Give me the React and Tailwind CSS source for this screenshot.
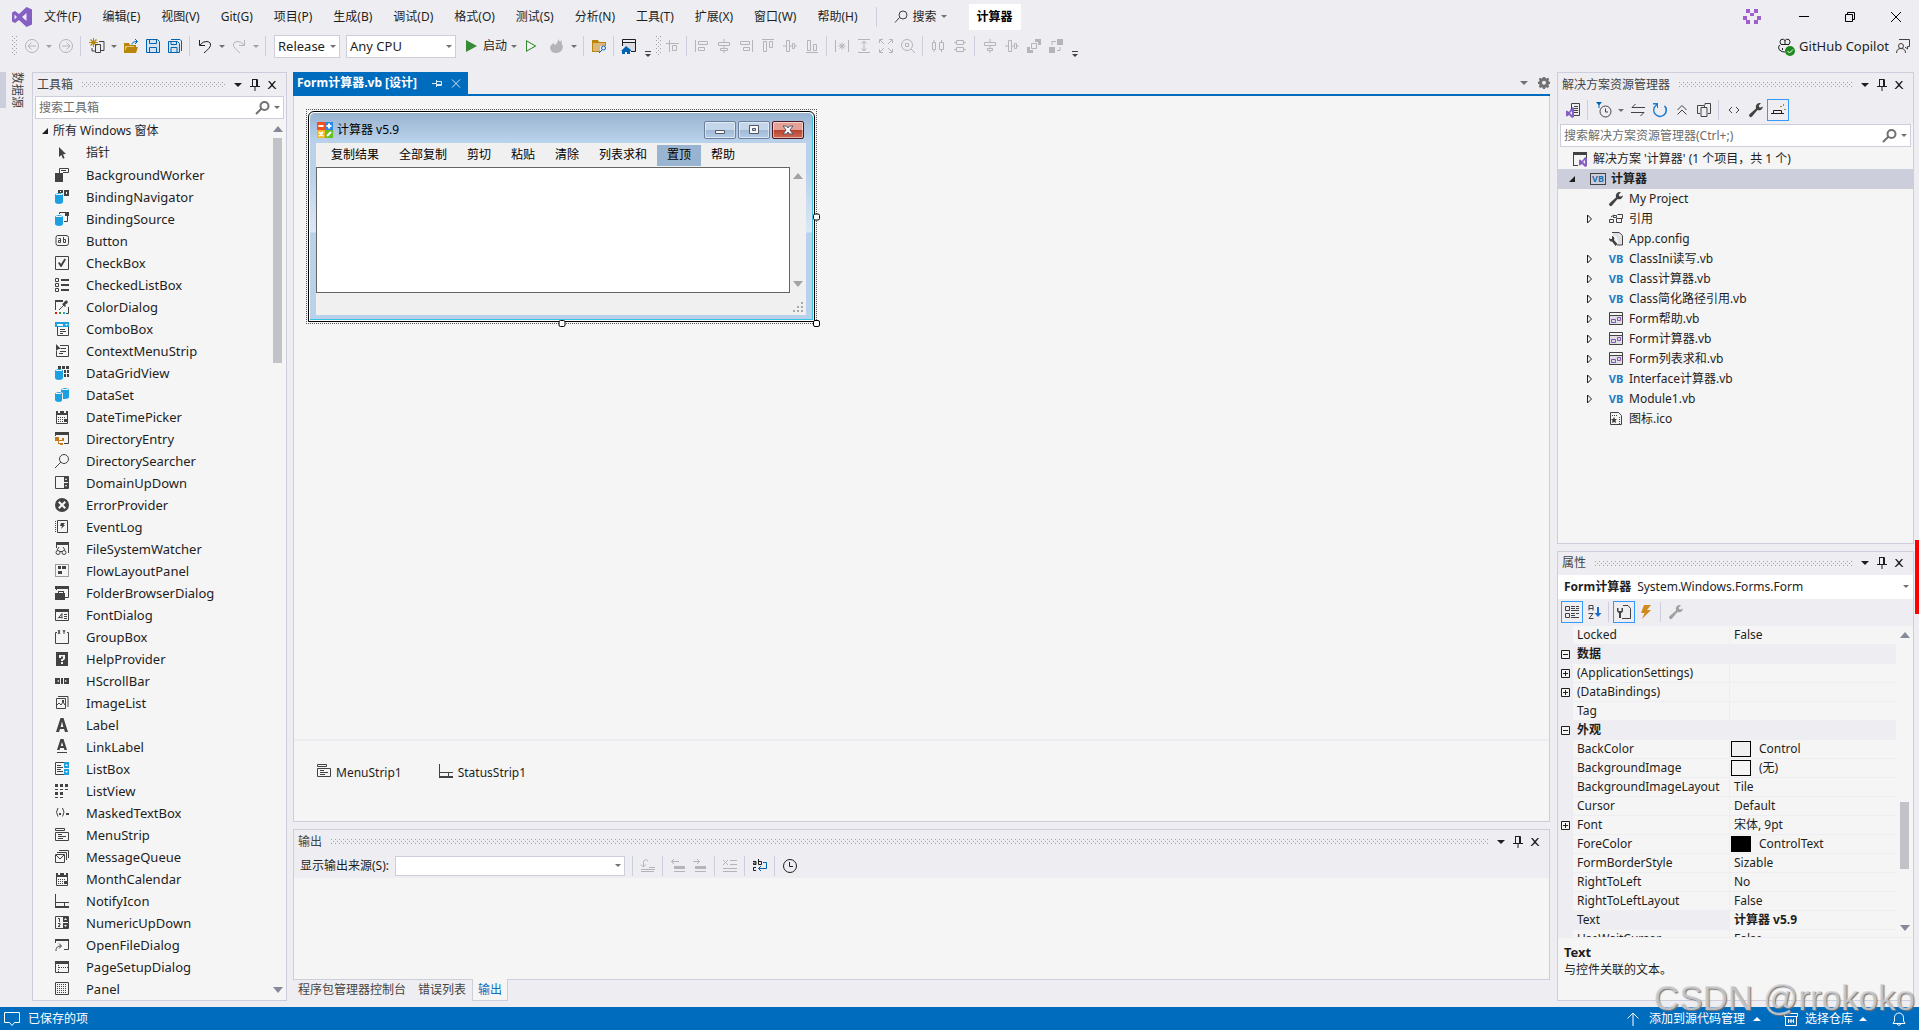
/**
 * App.jsx
 * Visual Studio style IDE shell: menu, toolbars, toolbox, form designer,
 * output window, solution explorer, property grid and status bar.
 */

import React from "react";

const MENUS = ["文件(F)", "编辑(E)", "视图(V)", "Git(G)", "项目(P)", "生成(B)", "调试(D)", "格式(O)", "测试(S)", "分析(N)", "工具(T)", "扩展(X)", "窗口(W)", "帮助(H)"];

const FORM_MENUS = ["复制结果", "全部复制", "剪切", "粘贴", "清除", "列表求和", "置顶", "帮助"];

// s: strokes, d: dotted strokes, f: fills, b: blue fills, w: light fills on top,
// p: purple strokes, u: blue strokes, x: [colour, path] fills underneath
const CYLINDER = "M1 6c0-1 2-2 4-2s4 1 4 2v7c0 1-2 2-4 2s-4-1-4-2z";
const CALENDAR = {
  s: "M2.5 3v11.5h11V3",
  f: "M2 2h12v4H2zM4 8h1v1H4zM6 8h1v1H6zM8 8h1v1H8zM10 8h1v1h-1zM4 10h1v1H4zM6 10h1v1H6zM8 10h1v1H8zM4 12h1v1H4zM6 12h1v1H6zM8 12h1v1H8zM10 10h3v3h-3z",
  w: "M4 2h2v2H4zM10 2h2v2h-2z",
};
const MENU_STRIP = { s: "M1.5 1.5h9v2h-9zM1.5 5.5h13v8h-13zM4 7.5h4M4 9.5h8M4 11.5h5" };
const TRAY_BAR = { s: "M1.5 1v13", f: "M1 9h14v1H1zM1 13h14v2H1zM10 10h1v3h-1z" };

const TOOLS = [
  ["指针", { f: "M5 2l7 7-3 .3 1.6 3.6-1.6.8-1.6-3.7L5 12z" }],
  ["BackgroundWorker", { s: "M5.5 6V1.5h9v4H9", f: "M1 6h8v9H1zM7 3h5v1H7z" }],
  ["BindingNavigator", { f: "M4 1h5v3H4zM10 1h5v6h-5z", b: CYLINDER, w: "M2 5h6v1H2zM6 2h1v1H6zM12 3h1v2h-1z" }],
  ["BindingSource", { s: "M5.5 3V1.5H11M13.5 5v5.5H10", f: "M11 1h4v4h-4z", b: CYLINDER, w: "M2 5h6v1H2z" }],
  ["Button", { s: "M4 2.5h8q2.5 0 2.5 2v6q0 2-2.5 2H4q-2 0-2-2v-6q0-2 2-2zM4.5 5.5h2v4h-2v-2h2M9.5 4v5.5h2v-3h-2" }],
  ["CheckBox", { s: "M1.5 1.5h13v13h-13z", f: "M4 8l1.500-1 1.500 2L10.500 3.500 12 4.500 7.500 12H6.500z" }],
  ["CheckedListBox", { s: "M1.5 1.5h3v3h-3zM1.5 6.5h3v3h-3zM1.5 11.5h3v3h-3z", f: "M7 2h8v2H7zM7 7h8v2H7zM7 12h8v2H7z" }],
  ["ColorDialog", { s: "M1.5 11V1.5H8M14.5 8v6.5H12M5 11l5-5", f: "M1 1h8v2H1zM8 5l2 2 1 1 1-1-1-1 2-1.5c2-2 0-4-2-2.5L9.5 4z", x: [["#e51400", "M1 13h2v2H1z"], ["#339933", "M5 13h2v2H5z"], ["#1ba1e2", "M9 13h2v2H9z"]] }],
  ["ComboBox", { s: "M3.5 6v8.5h11V6M6 8.5h5M6 10.5h6M6 12.5h3", b: "M1 1h14v5H1z", w: "M3 3h6v2H3zM11 3h3l-1.5 2z" }],
  ["ContextMenuStrip", { s: "M6 2.5h8.5v11h-12V8M5 10.5h4M7 5.5h5M6 8.5h6", f: "M2 1l5 5H4.5L2 8z" }],
  ["DataGridView", { f: "M4 1h3v3H4zM8 1h3v3H8zM12 1h3v3h-3zM10 5h2v3h-2zM13 5h2v3h-2zM10 9h2v3h-2zM13 9h2v3h-2z", b: CYLINDER, w: "M2 5h6v1H2z" }],
  ["DataSet", { b: "M1 7c0-1 2-2 4-2s3 1 3 2v6c0 1-1 2-3 2s-4-1-4-2zM7 3c0-1 2-2 4-2s4 1 4 2v7c0 1-2 2-4 2H9V6L7 5z", w: "M2 6h5v1H2zM8 2h6v1H8z" }],
  ["DateTimePicker", CALENDAR],
  ["DirectoryEntry", { s: "M1.5 5V1.5h13v11H10", f: "M1 1h14v3H1z", x: [["#c27d1a", "M1 6h4v3h3V7h2v3H5v2h4v2H6v-1H4v-3H1z"]] }],
  ["DirectorySearcher", { s: "M1 15l6-6M5.5 6a4.500 4.500 0 1 0 9 0 4.500 4.500 0 1 0-9 0" }],
  ["DomainUpDown", { s: "M1.5 1.5h13v12h-13z", f: "M10 2h4v5h-4zM10 8h4v5h-4z", w: "M11 5l1-2 1 2zM11 10h2l-1 2z" }],
  ["ErrorProvider", { f: "M8 1a7 7 0 1 0 0 14A7 7 0 1 0 8 1", w: "M5.5 4L8 6.5 10.5 4 12 5.5 9.5 8l2.5 2.5-1.5 1.5L8 9.5 5.5 12 4 10.5 6.5 8 4 5.5z" }],
  ["EventLog", { s: "M3.5 1.5h10v12h-10zM1.5 2v1M1.5 4v1M1.5 6v1M1.5 8v1M1.5 10v1M1.5 12v1", f: "M7 4h4L9.5 6H11L7 10l1-3H6z" }],
  ["FileSystemWatcher", { s: "M2.5 7V1.5h12V12M2 11.5a1.5 1.5 0 1 0 4 0 1.5 1.5 0 1 0-4 0M8 11.5a1.5 1.5 0 1 0 4 0 1.5 1.5 0 1 0-4 0M3 9l2-3M11 9L9 6M6 10.5h2", f: "M2 1h13v3H2z" }],
  ["FlowLayoutPanel", { d: "M1.5 1.5h13v12h-13z", f: "M4 3h3v3H4zM8 3h4v3H8zM4 8h4v3H4z" }],
  ["FolderBrowserDialog", { s: "M2.5 5V1.5h12v11H11", f: "M1 1h14v3H1zM4 6h6v2h1v7H1V8h3z", w: "M5 7h4v1H5z" }],
  ["FontDialog", { s: "M1.5 2.5h13v11h-13zM4 11.5l4-5v5M5 10.5h3M10 7.5h3M10 9.5h3M10 11.5h3", f: "M1 2h14v3H1z" }],
  ["GroupBox", { s: "M3 3.5H1.5v11h13v-11H13M4 1l2 4M6 1L4 5M9 1l1 2 1-2M10 3v2" }],
  ["HelpProvider", { f: "M2 1h12v14H2z", w: "M5 4h6v4L9 9.5V10H7V8.500l2-1V5.500H7V7H5zM7 11h2v2H7z" }],
  ["HScrollBar", { f: "M1 5h14v6H1z", w: "M5 7v2L3 8zM6 5h1v6H6zM9 5h1v6H9zM11 7v2l2-1z" }],
  ["ImageList", { s: "M4 1.5h10V12M2.5 3.5h9v10h-9zM3 10l2-2 2 2 2-3 2 3", f: "M8 5h2v2H8z" }],
  ["Label", { f: "M6.5 1h3L14 15h-3l-1-3H6l-1 3H2zM8 4.5L6.700 10h2.600z" }],
  ["LinkLabel", { f: "M6.5 0h3L13 11h-2.5l-.7-2H6.200l-.7 2H3zM8 3L6.800 7h2.400zM3 13h10v1H3z" }],
  ["ListBox", { s: "M10 1.5H1.5v12H10M3 4.5h4M3 6.5h6M3 8.5h4M3 10.5h6", b: "M10 1h5v6h-5zM10 8h5v6h-5z", w: "M11 5l1.5-2L14 5zM11 10h3l-1.5 2z" }],
  ["ListView", { f: "M1 1h3v3H1zM6 1h3v3H6zM11 1h3v3h-3zM1 9h3v3H1zM6 9h3v3H6zM1 6h3v1H1zM6 6h3v1H6zM11 6h3v1h-3zM1 14h3v1H1zM6 14h3v1H6z" }],
  ["MaskedTextBox", { s: "M4 3Q1 7 4 11.5M8.5 3q3 4 0 8.5", f: "M5 8h2v2H5zM12 8h3v2h-3z" }],
  ["MenuStrip", MENU_STRIP],
  ["MessageQueue", { s: "M1.5 5.5h9v8h-9zM2 6l4 4 4-4M3 3.5h9.5V11M5 1.5h9.5V9" }],
  ["MonthCalendar", CALENDAR],
  ["NotifyIcon", TRAY_BAR],
  ["NumericUpDown", { s: "M1.5 1.5h13v12h-13zM4 3.5h1.5V7M4 8.5h2v1.5l-2 1.5h2", f: "M9 2h5v5H9zM9 8h5v5H9z", w: "M10 5l1.5-2L13 5zM10 10h3l-1.5 2z" }],
  ["OpenFileDialog", { s: "M1.5 6V2.5h13v10H10M2 14c0-4 2-5 5-5M5 6.5L7.5 9 5 11.5", f: "M1 2h14v2H1z" }],
  ["PageSetupDialog", { s: "M1.5 2.5h13v11h-13z", f: "M1 2h14v3H1z", d: "M4.5 6v7M5 8.5h9" }],
  ["Panel", { s: "M1.5 1.5h13v12h-13z", d: "M3 3.5h10M3 5.5h10M3 7.5h10M3 9.5h10M3 11.5h10" }],
];

const WRENCH = "M15 4.5a4 4 0 0 1-5.500 3.500L4 14.500a1.600 1.600 0 0 1-2.500-2.300L8 6.500a4 4 0 0 1 5-5.300L10.800 3.500l.4 1.700 1.700.4z";
const VB_ICON = "vb";
const FORM_ICON = { s: "M1.5 1.5h13v12h-13zM1 4.5h14", x: [["#e0e0e4", "M2 5h12v8H2z"]], p: "M3.5 8.5h4v3h-4zM9.5 6.5h3v3h-3z" };

const FILES = [
  ["My Project", { f: WRENCH }, false],
  ["引用", { s: "M1.5 8.5h4v3h-4zM5.5 4.5h3v2h-3zM9.5 3.5h5v4h-5M8.5 7.5h5v4h-5zM3 6l3-2" }, true],
  ["App.config", { s: "M4 1.5h7l3.5 3v9.5H9", f: "M1 7c0 3 2 4 3 3.5L7.5 15l2-2L6 9C7 7 6 5.500 4 5v3H2.500z", x: [["#e0e0e4", "M5 2h6v3h3v9h-4V9L8 5H5z"]] }, false],
  ["ClassIni读写.vb", VB_ICON, true],
  ["Class计算器.vb", VB_ICON, true],
  ["Class简化路径引用.vb", VB_ICON, true],
  ["Form帮助.vb", FORM_ICON, true],
  ["Form计算器.vb", FORM_ICON, true],
  ["Form列表求和.vb", FORM_ICON, true],
  ["Interface计算器.vb", VB_ICON, true],
  ["Module1.vb", VB_ICON, true],
  ["图标.ico", { s: "M2.5 1.5h8l3 3v9h-11z", f: "M6 6l1 2h2L7.500 9.500 8 12l-2-1-2 1 .5-2.500L3 8h2z", d: "M4 4.5h6M11.5 6v7" }, false],
];

// [name, value, kind, swatch]
const PROPS = [
  ["Locked", "False"],
  ["数据", "", "group"],
  ["(ApplicationSettings)", "", "plus"],
  ["(DataBindings)", "", "plus"],
  ["Tag", ""],
  ["外观", "", "group"],
  ["BackColor", "Control", "", "bg-[#f0f0f0]"],
  ["BackgroundImage", "(无)", "", "bg-[#f5f5f5]"],
  ["BackgroundImageLayout", "Tile"],
  ["Cursor", "Default"],
  ["Font", "宋体, 9pt", "plus"],
  ["ForeColor", "ControlText", "", "bg-black"],
  ["FormBorderStyle", "Sizable"],
  ["RightToLeft", "No"],
  ["RightToLeftLayout", "False"],
  ["Text", "计算器 v5.9", "selected"],
  ["UseWaitCursor", "False"],
];

function Glyph({ icon, className = "text-[#424242]" }) {
  return (
    <svg viewBox="0 0 16 16" className={`h-4 w-4 shrink-0 ${className}`} fill="none" aria-hidden="true">
      {icon.x?.map(([color, d]) => <path key={d} d={d} fill={color} />)}
      {icon.f && <path d={icon.f} fill="currentColor" fillRule="evenodd" />}
      {icon.s && <path d={icon.s} stroke="currentColor" />}
      {icon.d && <path d={icon.d} stroke="currentColor" strokeDasharray="1 1" />}
      {icon.b && <path d={icon.b} fill="#1ba1e2" />}
      {icon.w && <path d={icon.w} fill="#f5f5f5" />}
      {icon.p && <path d={icon.p} stroke="#8254b5" />}
      {icon.u && <path d={icon.u} stroke="#0063b1" />}
    </svg>
  );
}

function Caret({ big = false, up = false, className = "text-[#717171]" }) {
  return (
    <svg viewBox="0 0 8 4" className={`pointer-events-none shrink-0 ${big ? "h-1 w-2" : "h-[3px] w-1.5"} ${className}`} aria-hidden="true">
      <path d={up ? "M0 4h8L4 0z" : "M0 0h8L4 4z"} fill="currentColor" />
    </svg>
  );
}

function ScrollArrow({ down = false, className = "text-[#868999]" }) {
  return (
    <svg viewBox="0 0 10 6" className={`h-1.5 w-2.5 shrink-0 ${className}`} aria-hidden="true">
      <path d={down ? "M0 0h10L5 6z" : "M0 6h10L5 0z"} fill="currentColor" />
    </svg>
  );
}

function Search() {
  return (
    <svg viewBox="0 0 16 16" className="h-4 w-4 shrink-0 text-[#717171]" fill="none" stroke="currentColor" strokeWidth="2" aria-hidden="true">
      <path d="M2 14l5-5M6.500 6a4 4 0 1 0 8 0 4 4 0 1 0-8 0" />
    </svg>
  );
}

const Sep = () => <span className="mr-1 ml-[3px] h-5 w-px shrink-0 bg-[#cccedb]" />;

function ToolButton({ icon, label, className, pressed = false }) {
  return (
    <button
      aria-label={label}
      className={`flex h-[22px] w-[22px] shrink-0 items-center justify-center ${pressed ? "border border-[#3399ff]" : ""}`}
    >
      <Glyph icon={icon} className={className} />
    </button>
  );
}

function CaretButton({ label, className }) {
  return (
    <button aria-label={label} className="flex h-[22px] w-3 shrink-0 items-center justify-center">
      <Caret className={className} />
    </button>
  );
}

function Grip({ vertical = false }) {
  return (
    <span
      className={`bg-[conic-gradient(from_270deg_at_1px_1px,#a0a0a8_90deg,transparent_0),conic-gradient(from_270deg_at_1px_1px,#a0a0a8_90deg,transparent_0)] bg-[length:4px_4px] bg-[position:0_0,2px_2px] ${vertical ? "h-5 w-[5px] shrink-0" : "h-[5px] flex-1"}`}
    />
  );
}

function PanelHeader({ title }) {
  return (
    <div className="flex h-[23px] shrink-0 items-center gap-px bg-[#eeeef2] pr-1.5 pl-1">
      <h2 className="mr-2 text-[#444]">{title}</h2>
      <Grip />
      <button aria-label="窗口位置" className="ml-1 flex h-4 w-4 items-center justify-center">
        <Caret big className="text-[#1e1e1e]" />
      </button>
      <button aria-label="自动隐藏" className="flex h-4 w-4 items-center justify-center">
        <Glyph icon={{ s: "M5.5 2v7.5h5V2.5h-5M3 9.5h10M8 10v4M9.5 3v6" }} className="text-[#1e1e1e]" />
      </button>
      <button aria-label="关闭" className="flex h-4 w-4 items-center justify-center">
        <Glyph icon={{ f: "M4 4h1.500L8 6.800 10.500 4H12L8.900 8 12.500 12H11L8 9.200 5 12H3.500L7.100 8z" }} className="text-[#1e1e1e]" />
      </button>
    </div>
  );
}

function SearchBox({ id, placeholder }) {
  return (
    <div className="mx-0.5 flex h-[23px] shrink-0 items-center gap-1 border border-[#cccedb] bg-white pr-[3px] pl-[3px]">
      <input id={id} aria-label={placeholder} placeholder={placeholder} className="min-w-0 flex-1 bg-transparent outline-none placeholder:text-[#6d6d6d]" />
      <Search />
      <Caret />
    </div>
  );
}

function MenuBar() {
  return (
    <header className="flex h-[33px] shrink-0 items-center">
      <svg viewBox="0 0 20 20" className="ml-3 h-5 w-5" aria-hidden="true">
        <path d="M14.500 0L20 2.500v15L14.500 20 7 13l-4 3-3-1.500v-9L3 4l4 3zM14.500 6L10 10l4.500 4zM2.500 7.500v5L5 10z" fill="#865fc5" fillRule="evenodd" />
      </svg>
      <nav className="ml-0.5 flex gap-px">
        {MENUS.map((m) => (
          <button key={m} className="px-2.5 whitespace-nowrap">{m}</button>
        ))}
      </nav>
      <span className="ml-2 h-5 w-px bg-[#cccedb]" />
      <button className="ml-4 flex items-center gap-1">
        <Glyph icon={{ s: "M2 13.5l4.500-5M6 6a4 4 0 1 0 8 0 4 4 0 1 0-8 0" }} />
        搜索
        <Caret />
      </button>
      <span className="ml-[22px] flex h-[26px] items-center bg-white px-2 font-bold text-black">计算器</span>
      <div className="ml-auto flex items-center">
        <svg viewBox="0 0 18 15" className="mr-5 h-[15px] w-[18px]" aria-hidden="true">
          <path d="M3 0h4v4H3zM11 0h4v4h-4zM7 4h4v3H7zM0 7h4v4H0zM14 7h4v4h-4zM3 11h4v4H3zM11 11h4v4h-4z" fill="#a05fd0" />
        </svg>
        <button aria-label="最小化" className="flex h-8 w-[46px] items-center justify-center">
          <span className="h-px w-2.5 bg-black" />
        </button>
        <button aria-label="还原" className="flex h-8 w-[46px] items-center justify-center">
          <svg viewBox="0 0 10 10" className="h-2.5 w-2.5" fill="none" stroke="#000" aria-hidden="true">
            <path d="M.5 2.5h7v7h-7zM2.5 2V.5h7v7H8" />
          </svg>
        </button>
        <button aria-label="关闭" className="flex h-8 w-[46px] items-center justify-center">
          <svg viewBox="0 0 10 10" className="h-2.5 w-2.5" stroke="#000" aria-hidden="true">
            <path d="M0 0l10 10M10 0L0 10" />
          </svg>
        </button>
      </div>
    </header>
  );
}

const FORMAT_TOOLS = [
  [["对齐到网格", "M2 5.5h13M5.5 2v12M8.5 7.5h4v5h-4z"]],
  [
    ["左对齐", "M1.5 2v12M4.5 3.5h9v3h-9zM4.5 9.5h6v3h-6z"],
    ["居中对齐", "M2.5 4.5h11v3h-11zM4.5 10.5h7v2h-7zM8 1v3M8 8v2M8 13v2"],
    ["右对齐", "M14.5 2v12M2.5 3.5h9v3h-9zM5.5 9.5h6v3h-6z"],
    ["顶端对齐", "M2 1.5h12M3.5 3.5h3v10h-3zM9.5 3.5h3v6h-3z"],
    ["中间对齐", "M4.5 2.5h3v11h-3zM10.5 5.5h2v5h-2zM1 8h3M8 8h2M13 8h2"],
    ["底端对齐", "M2 14.5h12M3.5 2.5h3v10h-3zM9.5 6.5h3v6h-3z"],
  ],
  [
    ["使宽度相同", "M1.5 2v12M14.5 2v12M8 4.5v7M4.5 8h7M5.5 5.5l5 5M10.5 5.5l-5 5"],
    ["使高度相同", "M2 1.5h12M2 14.5h12M8 3v10M5.5 5.5L8 3l2.5 2.5M5.5 10.5L8 13l2.5-2.5"],
    ["使大小相同", "M1.5 5V1.5H5M11 1.5h3.5V5M1.5 11v3.5H5M11 14.5h3.5V11M2 2l4 4M14 2l-4 4M2 14l4-4M14 14l-4-4"],
    ["按网格调整大小", "M1.5 7a5.5 5.5 0 1 0 11 0 5.5 5.5 0 1 0-11 0M11 11l4 4M5.5 5.5h3v3h-3z"],
  ],
  [
    ["水平间距相等", "M2.5 4.5h3v7h-3zM9.5 4.5h4v7h-4zM4 2v2M4 12v2M11.5 2v2M11.5 12v2"],
    ["垂直间距相等", "M4.5 2.5h7v4h-7zM4.5 9.5h7v4h-7zM2 4.5h2M12 4.5h2M2 11.5h2M12 11.5h2"],
  ],
  [
    ["水平居中", "M2.5 4.5h11v3h-11zM5.5 10.5h5v2h-5zM8 1v3M8 8v2M8 13v2"],
    ["垂直居中", "M4.5 2.5h3v11h-3zM10.5 5.5h2v5h-2zM1 8h3M8 8h2M13 8h2"],
    ["置于顶层", "M5.5 5.5h5v5h-5z", "M9 1h6v6h-3V4H9zM1 9h3v3h3v3H1z"],
    ["置于底层", "M4 7V3.5h4M12 9v3.5H9", "M9 1h6v6H9zM1 9h6v6H1z"],
  ],
];

function Overflow() {
  return (
    <button aria-label="工具栏选项" className="flex h-[22px] w-4 shrink-0 flex-col items-center justify-end gap-0.5">
      <span className="h-px w-1.5 bg-[#424242]" />
      <Caret className="text-[#424242]" />
    </button>
  );
}

function Toolbars() {
  const grey = "text-[#b4b4ba]";
  const circle = "M8 1.5a6.5 6.5 0 1 0 0 13 6.5 6.5 0 1 0 0-13";
  return (
    <div className="flex h-[26px] shrink-0 items-center pl-3">
      <Grip vertical />
      <span className="w-1" />
      <ToolButton label="后退" icon={{ s: `${circle}M12 8H4.5M7.5 4.5L4 8l3.5 3.5` }} className={grey} />
      <CaretButton label="后退列表" className="text-[#a0a0a6]" />
      <ToolButton label="前进" icon={{ s: `${circle}M4 8h7.5M8.5 4.5L12 8l-3.5 3.5` }} className={grey} />
      <Sep />
      <span className="w-px" />
      <ToolButton label="新建项目" icon={{ s: "M10 3.5h5v9h-3M6.5 6.5h5v8h-5zM3 10v3h3", x: [["#b8860b", "M4 0h1v3l2-2 1 1-2 2h3v1H6l2 2-1 1-2-2v3H4V6L2 8 1 7l2-2H0V4h3L1 2l1-1 2 2z"]] }} />
      <CaretButton label="新建列表" />
      <ToolButton label="打开" icon={{ x: [["#b8860b", "M1 5h5l1 2h6v2h2l-2 6H1z"], ["#e3c27a", "M2 8h9v1H4l-2 4z"]], u: "M9 6.5q0-3 5-3M12 1l2.5 2.5L12 6" }} />
      <ToolButton label="保存" icon={{ x: [["#d5e3f0", "M2 2h12v12H2z"]], u: "M1.5 1.5h11l2 2v11h-13zM4.5 1.5v4h7v-4M4.5 14.5v-5h7v5" }} />
      <ToolButton label="全部保存" icon={{ x: [["#d5e3f0", "M2 4h10v10H2z"]], u: "M1.5 3.5h9l2 2v9h-11zM4 3.5v3h5.5v-3M4 14.5v-5h6v5M4 1.5h9l1.5 1.5v10" }} />
      <Sep />
      <ToolButton label="撤消" icon={{ s: "M2.5 2v5.5H8M3 7q3-4 7-3.5t3.5 4Q13 10 7 15" }} className="text-[#1e1e1e]" />
      <CaretButton label="撤消列表" />
      <ToolButton label="重做" icon={{ s: "M13.5 2v5.5H8M13 7q-3-4-7-3.5T2.5 7.5Q3 10 9 15" }} className={grey} />
      <CaretButton label="重做列表" className="text-[#a0a0a6]" />
      <Sep />
      <div className="ml-1 flex h-[23px] w-[66px] shrink-0 items-center border border-[#cccedb] bg-white px-[3px] text-[13px]">
        <select aria-label="解决方案配置" className="min-w-0 flex-1 appearance-none bg-transparent outline-none">
          <option>Release</option>
        </select>
        <Caret />
      </div>
      <div className="ml-1.5 flex h-[23px] w-[110px] shrink-0 items-center border border-[#cccedb] bg-white px-[3px] text-[13px]">
        <select aria-label="解决方案平台" className="min-w-0 flex-1 appearance-none bg-transparent outline-none">
          <option>Any CPU</option>
        </select>
        <Caret />
      </div>
      <button className="ml-2 flex items-center gap-[3px]">
        <Glyph icon={{ x: [["#388a34", "M2 2l11 6-11 6z"]] }} />
        启动
      </button>
      <span className="w-px" />
      <CaretButton label="启动列表" />
      <ToolButton label="开始执行" icon={{ x: [["#388a34", "M3 2l10.500 6L3 14zM4.200 4v8l7-4z"]], w: "M4.200 4v8l7-4z" }} />
      <span className="w-1" />
      <ToolButton label="热重载" icon={{ f: "M9 1q1 3 3 2l1-1q-1 4 1 6-.5 7-6.500 7T1 10q0-3 4-5 0 2 1 2 3-2 3-6z" }} className={grey} />
      <CaretButton label="热重载列表" />
      <Sep />
      <ToolButton label="在文件中查找" icon={{ x: [["#b8860b", "M1 2h6l1 2h7v10H1z"], ["#dcb67a", "M2 5h12v8H2z"], ["#eeeef2", "M9 8h7v8H9z"]], u: "M8 15l3-3M10.5 10a2 2 0 1 0 4 0 2 2 0 1 0-4 0" }} />
      <Sep />
      <ToolButton label="主页" icon={{ s: "M1.5 8V1.5h13v12H10M1 4.5h14", x: [["#dcdce2", "M2 5h12v8h-4L6 8H2z"], ["#0063b1", "M5 8l5 4v1H9v3H6v-2H4v2H1v-3H0z"]] }} className="text-[#1e1e1e]" />
      <Overflow />
      <Grip vertical />
      {FORMAT_TOOLS.map((group, i) => (
        <React.Fragment key={i}>
          {i > 0 && <Sep />}
          {group.map(([label, s, f]) => (
            <ToolButton key={label} label={label} icon={{ s, f }} className={grey} />
          ))}
        </React.Fragment>
      ))}
      <Overflow />
      <div className="ml-auto flex items-center pr-2 text-[13px]">
        <button className="flex items-center gap-1.5">
          <span className="relative flex">
            <Glyph icon={{ s: "M2.5 7Q1 9 2 11.5q3 3 6 2.5M4 1.5q3-1 4 1 1-2 4-1 2 2 0 5H4q-2-3 0-5zM8 2v5M5.5 10v2" }} className="text-[#1e1e1e]" />
            <svg viewBox="0 0 10 10" className="absolute -right-0.5 -bottom-0.5 h-2.5 w-2.5" aria-hidden="true">
              <circle cx="5" cy="5" r="5" fill="#1f8a1f" />
              <path d="M2.5 5l2 2L8 3.5" fill="none" stroke="#fff" />
            </svg>
          </span>
          GitHub Copilot
        </button>
        <button aria-label="发送反馈" className="ml-1.5">
          <Glyph icon={{ s: "M4 1.5h10.5v7h-2V11L10 9M3.5 8a2.5 2.5 0 1 0 5 0 2.5 2.5 0 1 0-5 0M1.5 15q0-4.5 4.5-4.5T10.500 15" }} />
        </button>
      </div>
    </div>
  );
}

function Toolbox() {
  return (
    <aside className="flex w-[255px] shrink-0 flex-col border border-[#cccedb] bg-[#f5f5f5]">
      <PanelHeader title="工具箱" />
      <SearchBox id="toolbox-search" placeholder="搜索工具箱" />
      <div className="flex min-h-0 flex-1">
        <ul className="min-w-0 flex-1 overflow-hidden pt-px">
          <li className="flex h-[22px] items-center gap-1 pl-2">
            <svg viewBox="0 0 8 8" className="h-2 w-2" aria-hidden="true">
              <path d="M7 1v6H1z" fill="#1e1e1e" />
            </svg>
            <span>所有 Windows 窗体</span>
          </li>
          {TOOLS.map(([name, icon]) => (
            <li key={name}>
              <button className="flex h-[22px] w-full items-center gap-4 pl-[21px] text-left">
                <Glyph icon={icon} />
                <span className={name === "指针" ? "text-xs" : "text-[13px]"}>{name}</span>
              </button>
            </li>
          ))}
        </ul>
        <div className="flex w-[17px] flex-col items-center py-[7px]">
          <ScrollArrow />
          <span className="mt-1.5 h-[225px] w-[9px] bg-[#c2c3c9]" />
          <span className="flex-1" />
          <ScrollArrow down />
        </div>
      </div>
    </aside>
  );
}

function Handle({ className }) {
  return <span className={`absolute h-[7px] w-[7px] rounded-[2px] border border-black bg-white ${className}`} />;
}

function CaptionButton({ label, close = false, children }) {
  return (
    <button
      aria-label={label}
      className={`flex h-[18px] w-8 items-center justify-center rounded-[2px] border shadow-[inset_0_0_0_1px_rgba(255,255,255,0.5)] ${
        close
          ? "border-[#4c1822] bg-[linear-gradient(#e6a197_50%,#b9412c_50%,#cf6a55)]"
          : "border-[#6b7f9c] bg-[linear-gradient(#c3d6ea_50%,#9fb8d4_50%,#b5cde6)]"
      }`}
    >
      <svg viewBox="0 0 12 10" className="h-2.5 w-3" fill="#f8f8f8" stroke="#535666" aria-hidden="true">{children}</svg>
    </button>
  );
}

function FormWindow() {
  return (
    <div className="relative w-[511px] border border-dotted border-[#555] p-px">
      <div className="rounded-t-md border border-black bg-white p-px">
        <div className="rounded-t-[5px] border-r border-b border-[#36c5e0] bg-[#b9d1ea] bg-[linear-gradient(#99b4d1,#b9d1ea_28px,#b9d1ea_60px,#dce8f6_119px,#b9d1ea_120px)] px-1.5 pb-1">
          <div className="flex h-[30px] items-center gap-1 pt-1 pr-0.5 pl-px text-black">
            <svg viewBox="0 0 16 16" className="h-4 w-4" aria-hidden="true">
              <path d="M0 0h8v8H0z" fill="#f25022" />
              <path d="M8 0h8v8H8z" fill="#2b88e6" />
              <path d="M0 8h8v8H0z" fill="#f5b81c" />
              <path d="M8 8h8v8H8z" fill="#6abf1e" />
              <path d="M1.5 4h5M9.5 4h5M12 1.5v5M2 10l4 4M6 10l-4 4M10 14l4-4" stroke="#fff" strokeWidth="2" />
            </svg>
            <span className="flex-1">计算器 v5.9</span>
            <div className="flex gap-0.5">
              <CaptionButton label="窗体最小化"><path d="M1.5 5.5h9v3h-9z" /></CaptionButton>
              <CaptionButton label="窗体最大化"><path fillRule="evenodd" d="M1.5 .5h9v8h-9zM4.5 3.5v2h3v-2z" /></CaptionButton>
              <CaptionButton label="窗体关闭" close><path d="M1 1h3.500L6 3l1.500-2H11L8 5l3 4H7.500L6 7 4.500 9H1l3-4z" /></CaptionButton>
            </div>
          </div>
          <div className="bg-[#f0f0f0]">
            <div className="flex h-6 items-center pl-[5px] text-black">
              {FORM_MENUS.map((m) => (
                <button key={m} className={`h-[21px] px-2.5 whitespace-nowrap ${m === "置顶" ? "bg-[#99b4d1]" : ""}`}>{m}</button>
              ))}
            </div>
            <div className="flex h-[126px]">
              <textarea aria-label="表达式" className="block min-w-0 flex-1 resize-none border border-[#646464] bg-white outline-none" />
              <div className="flex w-4 flex-col items-center justify-between py-1.5">
                <ScrollArrow className="text-[#a3a3a3]" />
                <ScrollArrow down className="text-[#a3a3a3]" />
              </div>
            </div>
            <div className="flex h-[22px] items-end justify-end p-[3px]">
              <svg viewBox="0 0 10 10" className="h-2.5 w-2.5" fill="#a8a8a8" aria-hidden="true">
                <path d="M8 0h2v2H8zM4 4h2v2H4zM8 4h2v2H8zM0 8h2v2H0zM4 8h2v2H4zM8 8h2v2H8z" />
              </svg>
            </div>
          </div>
        </div>
      </div>
      <Handle className="top-1/2 -right-1 -translate-y-1/2" />
      <Handle className="-bottom-1 left-1/2 -translate-x-1/2" />
      <Handle className="-right-1 -bottom-1" />
    </div>
  );
}

function Designer() {
  return (
    <section className="flex min-h-0 flex-1 flex-col">
      <div className="flex h-6 shrink-0 items-end border-b-2 border-[#006cbe]">
        <div className="flex h-[22px] items-center bg-[#006cbe] px-1 text-white">
          <span className="font-bold whitespace-nowrap">Form计算器.vb [设计]</span>
          <button aria-label="固定选项卡" className="ml-3">
            <Glyph icon={{ s: "M3 8.5h4M7.5 5v7M8 6.5h4.5v4H8M8 9.5h4" }} className="text-[#d8e8f5]" />
          </button>
          <button aria-label="关闭选项卡" className="ml-[3px]">
            <Glyph icon={{ s: "M4 4.5l8 8M12 4.5l-8 8" }} className="text-[#d8e8f5]" />
          </button>
        </div>
        <div className="ml-auto flex h-[22px] items-center gap-2.5">
          <Caret big />
          <svg viewBox="2 3 12 12" className="h-3 w-3 text-[#717171]" aria-hidden="true">
            <path
              d="M7 2.500h2l.3 1.500 1.200.5 1.300-.8 1.400 1.400-.8 1.300.5 1.100 1.600.3v2l-1.600.3-.5 1.200.8 1.300-1.400 1.400-1.300-.8-1.200.5L9 15.200H7l-.3-1.500-1.200-.5-1.300.8-1.400-1.400.8-1.300-.5-1.200-1.600-.3v-2l1.600-.3.5-1.100-.8-1.300 1.400-1.400 1.300.8 1.200-.5zM8 6.800a2 2 0 1 0 0 4 2 2 0 1 0 0-4"
              fill="currentColor"
              fillRule="evenodd"
            />
          </svg>
        </div>
      </div>
      <div className="flex min-h-0 flex-1 flex-col border border-t-0 border-[#cccedb] bg-[#f5f5f5]">
        <div className="min-h-0 flex-1 pt-[13px] pl-3">
          <FormWindow />
        </div>
        <div className="flex h-[82px] shrink-0 gap-9 border-t-2 border-[#eeeef2] pt-[22px] pl-[22px]">
          <div className="flex h-[18px] items-end gap-1">
            <span className="self-start"><Glyph icon={MENU_STRIP} /></span>
            <span>MenuStrip1</span>
          </div>
          <div className="flex h-[18px] items-end gap-1">
            <span className="self-start"><Glyph icon={TRAY_BAR} /></span>
            <span>StatusStrip1</span>
          </div>
        </div>
      </div>
    </section>
  );
}

function Output() {
  const grey = "text-[#b4b4ba]";
  return (
    <section className="mt-[7px] flex h-[172px] shrink-0 flex-col">
      <div className="flex min-h-0 flex-1 flex-col border border-[#cccedb] bg-[#f5f5f5]">
        <PanelHeader title="输出" />
        <div className="flex h-[25px] shrink-0 items-center bg-[#eeeef2] pl-1.5">
          <label htmlFor="output-source" className="mr-1.5 whitespace-nowrap">显示输出来源(S):</label>
          <div className="mr-1 flex h-5 w-[230px] items-center border border-[#cccedb] bg-white pr-[3px]">
            <select id="output-source" className="min-w-0 flex-1 appearance-none bg-transparent outline-none" />
            <Caret />
          </div>
          <Sep />
          <ToolButton label="查找消息" icon={{ s: "M3.5 9V3q3-3 4.5 0M1 6.5L3.5 9 6 6.5M9 9.5h6M1 13.5h13", f: "M1 11h14v1H1z" }} className={grey} />
          <Sep />
          <ToolButton label="上一条消息" icon={{ s: "M1 3.5h8M4 1L1.5 3.5 4 6M4 13.5h11", f: "M4 8h11v3H4z" }} className={grey} />
          <ToolButton label="下一条消息" icon={{ s: "M1 3.5h7M5 1l2.5 2.5L5 6M3 13.5h11", f: "M3 8h11v3H3z" }} className={grey} />
          <Sep />
          <ToolButton label="全部清除" icon={{ s: "M1 2l5 5M6 2L1 7M8 2.5h7M8 6.5h7M1 10.5h14M1 13.5h14" }} className={grey} />
          <Sep />
          <ToolButton label="切换自动换行" icon={{ s: "M1 3.5h3v3H1.5v-1.5H4M6.5 1v5.5h3v-3h-3M4 9.5H1.5v3H4", u: "M11 4.5h3.5v6H7M9 8l-2.5 2.5L9 13" }} className="text-[#1e1e1e]" />
          <Sep />
          <ToolButton label="显示时间戳" icon={{ s: "M8 1.5a6.5 6.5 0 1 0 0 13 6.5 6.5 0 1 0 0-13M7.5 4v4.5H11" }} className="text-[#1e1e1e]" />
        </div>
      </div>
      <div role="tablist" className="-mt-px flex h-[22px] shrink-0 items-center text-[#444]">
        <button role="tab" className="pr-1.5 pl-[5px]">程序包管理器控制台</button>
        <button role="tab" className="px-1.5">错误列表</button>
        <button role="tab" aria-selected="true" className="h-[22px] border border-t-0 border-[#cccedb] bg-[#f5f5f5] px-[5px] text-[#0e70c0]">输出</button>
      </div>
    </section>
  );
}

function TreeIcon({ icon }) {
  if (icon === VB_ICON) {
    return <span className="w-4 text-center text-[11px] font-bold text-[#1c7bc4]">VB</span>;
  }
  return <Glyph icon={icon} />;
}

function SolutionExplorer() {
  return (
    <section className="flex min-h-0 flex-[473] flex-col border border-[#cccedb] bg-[#f5f5f5]">
      <PanelHeader title="解决方案资源管理器" />
      <div className="flex h-7 shrink-0 items-center bg-[#eeeef2] pl-1">
        <ToolButton label="主页" icon={{ s: "M6.5 7V1.5h8v12H9M9 4.5h4M9 6.5h4M9 8.5h4M9 10.5h4", x: [["#865fc5", "M7 5l2 1v9l-2 1-3-3-2 1.500L1 14V9l1-.5L4 10z"]], w: "M7 9v4l-2-2z" }} />
        <Sep />
        <span className="w-px" />
        <ToolButton label="筛选器" icon={{ s: "M9.5 4a5.5 5.5 0 1 0 0 11 5.5 5.5 0 1 0 0-11M9.5 6.5V10H12", x: [["#0063b1", "M0 0h6L3.500 3v3h-1V3z"]] }} />
        <CaretButton label="筛选器列表" />
        <ToolButton label="同步" icon={{ s: "M15 5.5H2L5.5 2M1 10.5h13L10.5 14" }} />
        <ToolButton label="刷新" icon={{ x: [["#1a7bd0", "M5 2v1.500A5.500 5.500 0 1 0 12 4.500L13 3.200A7 7 0 1 1 4 2.500H1V1h5v5H5z"]] }} />
        <ToolButton label="全部折叠" icon={{ s: "M3.5 8L8 3.5 12.5 8M3.5 12.5L8 8l4.5 4.5" }} />
        <ToolButton label="显示所有文件" icon={{ s: "M4 11.5H1.5v-8h7V5M5 5.5h6v9H5zM9 3V1.5h5.5v10H12" }} />
        <Sep />
        <ToolButton label="查看代码" icon={{ s: "M6 5L3 8l3 3M10 5l3 3-3 3" }} />
        <ToolButton label="属性" icon={{ f: WRENCH }} />
        <ToolButton pressed label="预览选定项" icon={{ s: "M1 11.5h13M3.5 11V8.5h8V11", x: [["#b8860b", "M10 4h2v1h-2zM13 2h1v2h-1zM14 7h2v1h-2z"]] }} className="text-[#1e1e1e]" />
      </div>
      <SearchBox id="solution-search" placeholder="搜索解决方案资源管理器(Ctrl+;)" />
      <ul className="pt-0.5">
        <li className="flex h-5 items-center gap-[5px] pl-3.5">
          <Glyph icon={{ s: "M1.5 14V2.5h13V7M1 14.5h5", f: "M1 1h14v3H1z", x: [["#865fc5", "M13 6l2 1v8l-2 1-3-3-2 1.500L7 14V9l1-.5L10 10z"]], w: "M13 9v4l-2-2z" }} />
          解决方案 '计算器' (1 个项目，共 1 个)
        </li>
        <li className="flex h-5 items-center bg-[#cccedb] pl-2.5 font-bold">
          <svg viewBox="0 0 8 8" className="h-2 w-2" aria-hidden="true">
            <path d="M7 1v6H1z" fill="#1e1e1e" />
          </svg>
          <span className="mr-[5px] ml-3.5 flex h-3 w-4 items-center justify-center border border-[#424242] text-[9px] text-[#1c6fb0]">VB</span>
          计算器
        </li>
        {FILES.map(([name, icon, expandable]) => (
          <li key={name} className="flex h-5 items-center pl-7">
            <svg viewBox="0 0 8 10" className="mr-3.5 h-2.5 w-2" fill="none" stroke="#1e1e1e" aria-hidden="true">
              {expandable && <path d="M1.5 1v8l4-4z" />}
            </svg>
            <TreeIcon icon={icon} />
            <span className="ml-[5px]">{name}</span>
          </li>
        ))}
      </ul>
    </section>
  );
}

function Expander({ plus }) {
  return (
    <svg viewBox="0 0 9 9" className="mx-auto h-[9px] w-[9px]" fill="#f5f5f5" stroke="#1e1e1e" aria-hidden="true">
      <path d={plus ? "M.5.5h8v8h-8zM2 4.5h5M4.5 2v5" : "M.5.5h8v8h-8zM2 4.5h5"} />
    </svg>
  );
}

function PropertyRow({ row: [name, value, kind, swatch] }) {
  if (kind === "group") {
    return (
      <tr className="h-[19px] bg-[#eeeef2]">
        <td className="w-[15px] p-0"><Expander /></td>
        <th colSpan={2} scope="rowgroup" className="p-0 pl-1 text-left font-bold">{name}</th>
      </tr>
    );
  }
  return (
    <tr className="h-[19px]">
      <td className="w-[15px] bg-[#eeeef2] p-0">{kind === "plus" && <Expander plus />}</td>
      <th
        scope="row"
        className={`w-[157px] border-r border-b border-[#eeeef2] p-0 pl-1 text-left font-normal ${kind === "selected" ? "bg-[#eeeef2]" : ""}`}
      >
        {name}
      </th>
      <td className={`border-b border-[#eeeef2] p-0 whitespace-nowrap ${kind === "selected" ? "font-bold" : ""}`}>
        <span className="flex items-center">
          {swatch && <span className={`mr-1 ml-px h-4 w-5 border border-black ${swatch}`} />}
          <span className="pl-1">{value}</span>
        </span>
      </td>
    </tr>
  );
}

function Properties() {
  return (
    <section className="mt-[7px] flex min-h-0 flex-[451] flex-col border border-[#cccedb] bg-[#f5f5f5]">
      <PanelHeader title="属性" />
      <div className="flex h-6 shrink-0 items-center gap-1.5 bg-white pr-1 pl-1.5">
        <strong>Form计算器</strong>
        <span className="flex-1">System.Windows.Forms.Form</span>
        <Caret />
      </div>
      <div className="flex h-[27px] shrink-0 items-center bg-[#eeeef2] pl-[3px]">
        <ToolButton pressed label="按分类顺序" icon={{ s: "M1.5 2.5h4v4h-4zM1.5 9.5h4v4h-4zM7 2.5h4M12 2.5h3M7 4.5h4M12 4.5h3M7 6.5h8M7 9.5h4M12 9.5h3M7 11.5h4M7 13.5h8" }} />
        <ToolButton label="字母顺序" icon={{ s: "M3 6.5V1.5h4v5M3 4.5h4M2.5 9.5H7l-4 5h4.5", x: [["#1a6fd0", "M11 3h2v6h2.500L12 13 8.500 9H11z"]] }} />
        <Sep />
        <ToolButton pressed label="属性" icon={{ s: "M7 1.5h5l2.5 3v10H6", f: "M1 4v3q1 2 2 2v5h2V9q2-.5 2-2V4H5.500v3h-3V4z" }} />
        <ToolButton label="事件" icon={{ x: [["#d08a1e", "M6 1h7L9 6h4L4 15l2.500-6H3z"]] }} />
        <Sep />
        <ToolButton label="属性页" icon={{ f: WRENCH }} className="text-[#a0a0a0]" />
      </div>
      <div className="flex min-h-0 flex-1 overflow-hidden border-b border-[#eeeef2]">
        <div className="min-w-0 flex-1">
          <table className="w-full table-fixed border-separate border-spacing-0">
            <tbody>
              {PROPS.map((row) => <PropertyRow key={row[0]} row={row} />)}
            </tbody>
          </table>
        </div>
        <div className="flex w-[17px] flex-col items-center py-1.5">
          <ScrollArrow />
          <span className="flex-[165]" />
          <span className="h-[67px] w-[9px] bg-[#c2c3c9]" />
          <span className="flex-[56]" />
          <ScrollArrow down />
        </div>
      </div>
      <div className="h-[62px] shrink-0 px-1.5 pt-1.5">
        <strong className="block text-[13px] leading-4">Text</strong>
        <p className="pt-0.5">与控件关联的文本。</p>
      </div>
    </section>
  );
}

function StatusBar() {
  return (
    <footer className="flex h-[23px] shrink-0 items-center bg-[#006cbe] px-1 text-white">
      <Glyph icon={{ s: "M.5 1.5h15v10h-5l-2.5 3-2.5-3h-5z" }} className="text-white" />
      <span className="ml-2">已保存的项</span>
      <button className="ml-auto flex items-center gap-2">
        <Glyph icon={{ s: "M8 15V2M2.5 7.5L8 2l5.5 5.5" }} className="text-white" />
        <span>添加到源代码管理</span>
        <Caret big up className="text-white" />
      </button>
      <button className="ml-[22px] flex items-center gap-1.5">
        <Glyph icon={{ s: "M1.5 2.5h13v3h-13zM2.5 5.5v9h11v-9M5.5 8v4M8 8v4M10.500 8v4M5.500 10h5" }} className="text-white" />
        <span>选择仓库</span>
        <Caret big up className="text-white" />
      </button>
      <button aria-label="通知" className="mr-2 ml-6">
        <Glyph icon={{ s: "M2 12.5h12l-1.500-2.500V6.500a4.500 4.500 0 0 0-9 0V10zM6 13q2 3 4 0" }} className="text-white" />
      </button>
    </footer>
  );
}

export default function App() {
  return (
    <div className="relative flex h-screen flex-col overflow-hidden bg-[#eeeef2] font-['Noto_Sans','Noto_Sans_CJK_SC',sans-serif] text-xs leading-4 text-[#1e1e1e]">
      <MenuBar />
      <Toolbars />
      <main className="flex min-h-0 flex-1 pt-[13px] pb-1.5">
        <button className="flex h-9 w-8 shrink-0 items-center border-l-[6px] border-[#cccedb] pl-[3px] text-[#444] [text-orientation:sideways]">
          <span className="[writing-mode:vertical-rl]">数据源</span>
        </button>
        <Toolbox />
        <div className="ml-1.5 flex min-w-0 flex-1 flex-col">
          <Designer />
          <Output />
        </div>
        <div className="mr-[5px] ml-[7px] flex w-[357px] shrink-0 flex-col">
          <SolutionExplorer />
          <Properties />
        </div>
      </main>
      <StatusBar />
      <span className="absolute top-[540px] right-0 h-[74px] w-1 bg-[#ff0000]" />
      <span className="pointer-events-none absolute right-1 bottom-3 font-['Liberation_Sans',sans-serif] text-[35px] leading-10 whitespace-nowrap text-[#d4d4d8]/80 [text-shadow:1px_1px_1px_#777]">
        CSDN @rrokoko
      </span>
    </div>
  );
}
